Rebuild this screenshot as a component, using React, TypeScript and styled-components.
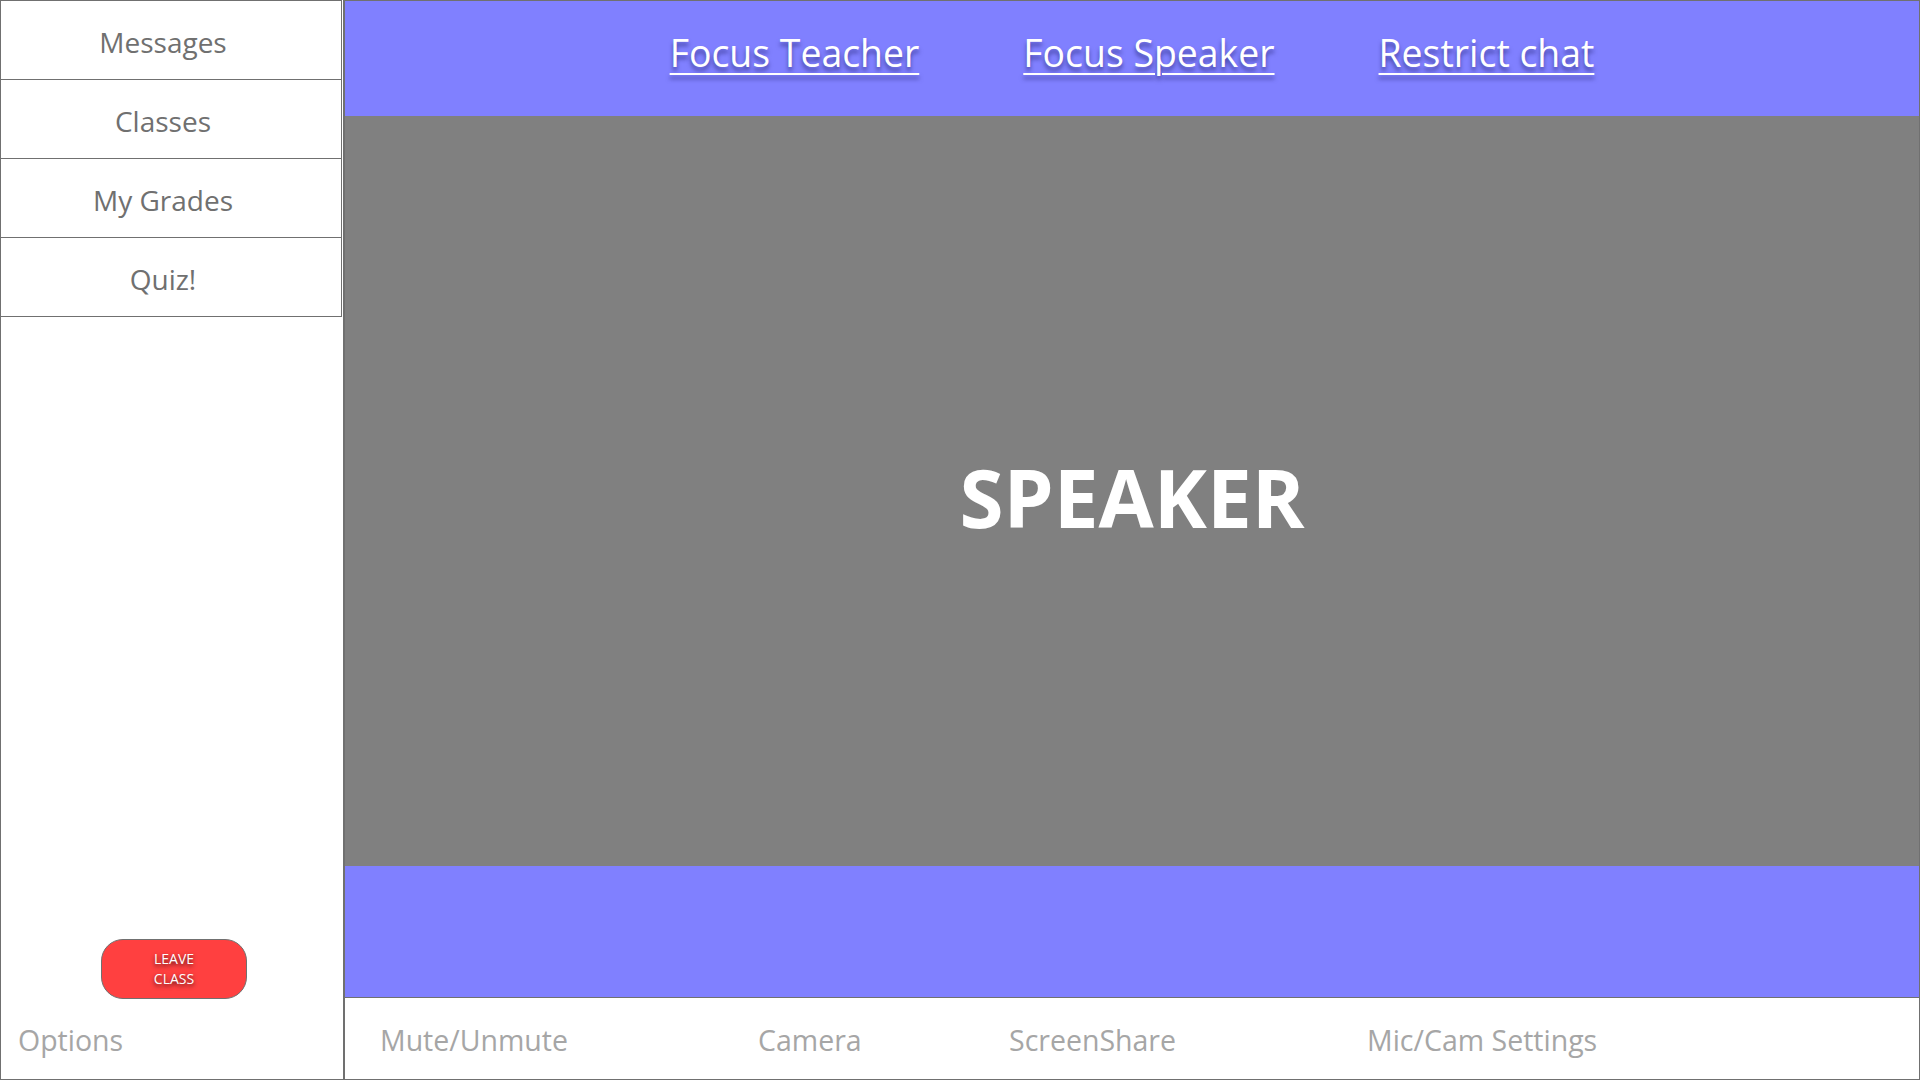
import React from "react";
import styled, { createGlobalStyle } from "styled-components";

const GlobalStyle = createGlobalStyle`
  html, body {
    margin: 0;
    padding: 0;
    width: 1920px;
    height: 1080px;
    overflow: hidden;
    background: #ffffff;
    font-family: "Segoe UI", "Open Sans", "Noto Sans", sans-serif;
  }
  * { box-sizing: border-box; }
`;

const LINE = "#707070";

const Layout = styled.div`
  display: grid;
  grid-template-columns: 344px 1fr;
  width: 1920px;
  height: 1080px;
`;

const Sidebar = styled.aside`
  display: flex;
  flex-direction: column;
  border-left: 1px solid ${LINE};
  border-right: 1px solid ${LINE};
  border-bottom: 1px solid ${LINE};
  background: #fff;
`;

const Menu = styled.nav`
  display: flex;
  flex-direction: column;
  width: 341px;
  border-top: 1px solid ${LINE};
  border-right: 1px solid ${LINE};
`;

const MenuItem = styled.div`
  height: 79px;
  display: flex;
  align-items: center;
  justify-content: center;
  padding-right: 16px;
  padding-top: 3px;
  border-bottom: 1px solid ${LINE};
  color: #707070;
  font-size: 28px;
  font-weight: 400;
`;

const Spacer = styled.div`
  flex: 1;
`;

const LeaveButton = styled.button`
  align-self: center;
  margin-left: 4px;
  margin-bottom: -1px;
  width: 146px;
  height: 60px;
  border: 1px solid ${LINE};
  border-radius: 22px;
  background: #ff4040;
  color: #ffffff;
  font-family: inherit;
  font-size: 14px;
  line-height: 20px;
  text-shadow: 0 2px 4px rgba(0, 0, 0, 0.75);
  padding: 0;
`;

const OptionsRow = styled.div`
  height: 81px;
  display: flex;
  align-items: center;
  padding-left: 17px;
  padding-top: 2px;
  color: #a6a6a6;
  font-size: 28.5px;
`;

const Main = styled.main`
  display: flex;
  flex-direction: column;
  border: 1px solid ${LINE};
`;

const TopBar = styled.header`
  height: 115px;
  flex: none;
  background: #8080ff;
  display: flex;
  align-items: center;
  justify-content: center;
  gap: 104px;
  padding-bottom: 12px;
`;

const TopLink = styled.a`
  color: #ffffff;
  font-size: 37.4px;
  text-decoration: underline;
  text-decoration-thickness: 2px;
  text-underline-offset: 6px;
  text-shadow: 0 4px 4px rgba(20, 20, 90, 0.55);
  cursor: pointer;
`;

const Stage = styled.section`
  flex: 1;
  background: #808080;
  display: flex;
  align-items: center;
  justify-content: center;
`;

const StageLabel = styled.div`
  color: #ffffff;
  font-size: 80px;
  font-weight: 700;
  padding-top: 10px;
`;

const Strip = styled.div`
  height: 132px;
  flex: none;
  background: #8080ff;
  border-bottom: 1px solid ${LINE};
`;

const Controls = styled.div`
  height: 81px;
  flex: none;
  display: grid;
  grid-template-columns: 378px 251px 358px 1fr;
  align-items: center;
  padding-left: 35px;
  padding-top: 2px;
  color: #a6a6a6;
  font-size: 28.5px;
`;

const Control = styled.div`
  white-space: nowrap;
`;

const menuItems = ["Messages", "Classes", "My Grades", "Quiz!"];
const links = ["Focus Teacher", "Focus Speaker", "Restrict chat"];
const controls = ["Mute/Unmute", "Camera", "ScreenShare", "Mic/Cam Settings"];

export default function App() {
  return (
    <>
      <GlobalStyle />
      <Layout>
        <Sidebar>
          <Menu>
            {menuItems.map((m) => (
              <MenuItem key={m}>{m}</MenuItem>
            ))}
          </Menu>
          <Spacer />
          <LeaveButton>
            LEAVE
            <br />
            CLASS
          </LeaveButton>
          <OptionsRow>Options</OptionsRow>
        </Sidebar>
        <Main>
          <TopBar>
            {links.map((l) => (
              <TopLink key={l}>{l}</TopLink>
            ))}
          </TopBar>
          <Stage>
            <StageLabel>SPEAKER</StageLabel>
          </Stage>
          <Strip />
          <Controls>
            {controls.map((c) => (
              <Control key={c}>{c}</Control>
            ))}
          </Controls>
        </Main>
      </Layout>
    </>
  );
}
